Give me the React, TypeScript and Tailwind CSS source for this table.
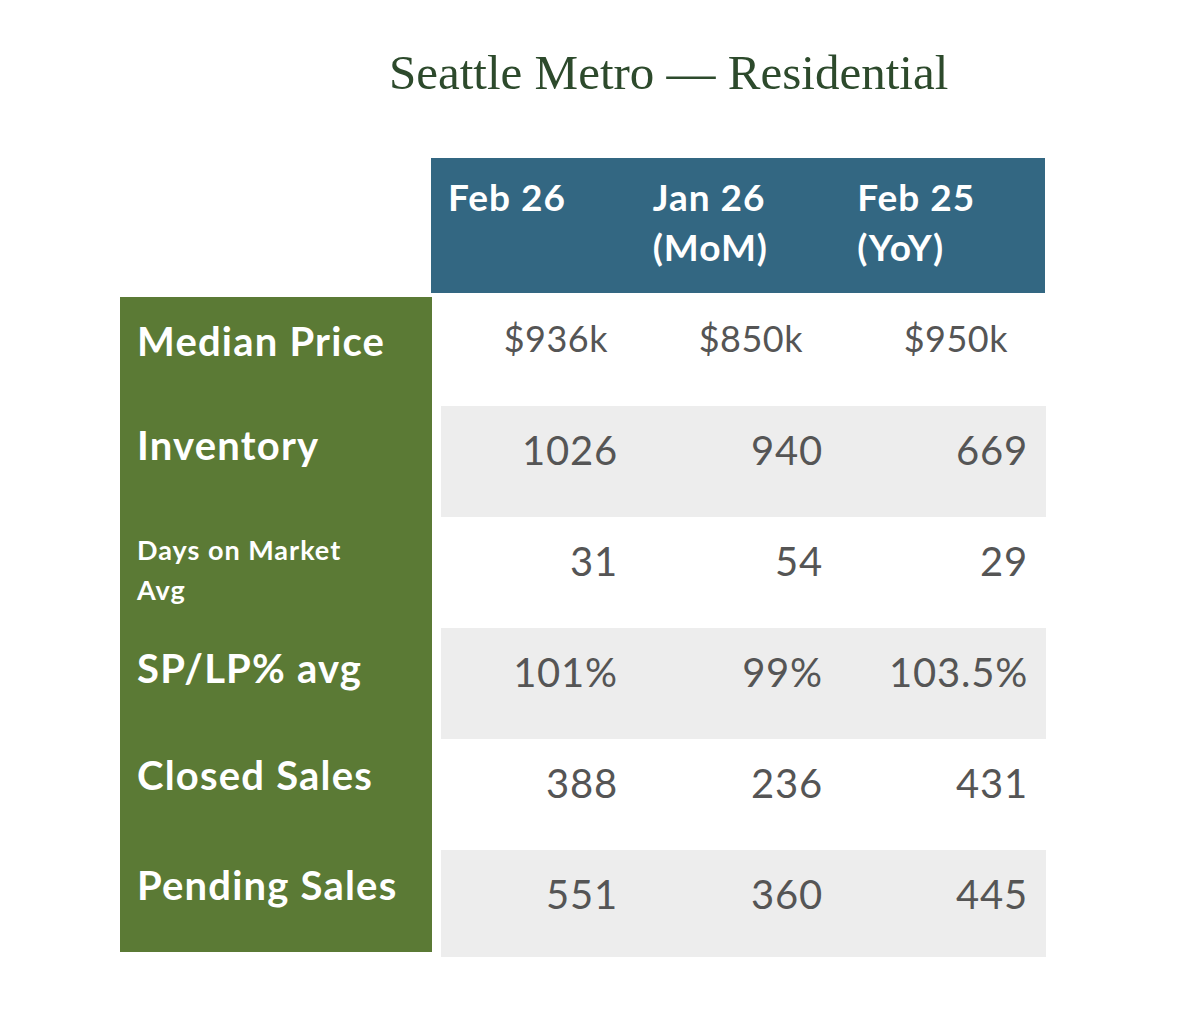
import React from "react";

const rows = [
  { label: "Median Price", vals: ["$936k", "$850k", "$950k"], gray: false, h: "h-[109px]" },
  { label: "Inventory", vals: ["1026", "940", "669"], gray: true, h: "h-[111px]" },
  { label: "Days on Market Avg", vals: ["31", "54", "29"], gray: false, h: "h-[111px]" },
  { label: "SP/LP% avg", vals: ["101%", "99%", "103.5%"], gray: true, h: "h-[111px]" },
  { label: "Closed Sales", vals: ["388", "236", "431"], gray: false, h: "h-[111px]" },
  { label: "Pending Sales", vals: ["551", "360", "445"], gray: true, h: "h-[107px]" },
];

const sans = "font-['Lato','Open_Sans',sans-serif]";

export default function App() {
  return (
    <div className="w-[1196px] h-[1022px] bg-white overflow-hidden">
      <h1 className="pl-[389px] pt-[44px] text-[49px] leading-[58px] font-['Liberation_Serif','Times_New_Roman',serif] text-[#2d4a2c] font-normal">
        Seattle Metro — Residential
      </h1>

      <div className={`ml-[431px] mt-[56px] w-[614px] h-[135px] bg-[#336782] grid grid-cols-3 ${sans} text-white font-bold text-[37px] leading-[50px] tracking-[1px]`}>
        <div className="pl-[17px] pt-[14px]">Feb 26</div>
        <div className="pl-[17px] pt-[14px]">
          <div>Jan 26</div>
          <div>(MoM)</div>
        </div>
        <div className="pl-[17px] pt-[14px]">
          <div>Feb 25</div>
          <div>(YoY)</div>
        </div>
      </div>

      <div className="flex mt-[4px] ml-[120px]">
        <div className={`w-[312px] h-[655px] bg-[#5b7a35] flex flex-col text-white font-bold ${sans}`}>
          <div className="h-[109px] pl-[17px] pt-[21px] text-[40px] leading-[46px] tracking-[1.2px]">Median Price</div>
          <div className="h-[111px] pl-[17px] pt-[16px] text-[40px] leading-[46px] tracking-[1.2px]">Inventory</div>
          <div className="h-[111px] pl-[17px] pt-[13px] text-[27px] leading-[40px] tracking-[1px]">
            <div>Days on Market</div>
            <div>Avg</div>
          </div>
          <div className="h-[111px] pl-[17px] pt-[17px] text-[40px] leading-[46px] tracking-[1.2px]">SP/LP% avg</div>
          <div className="h-[111px] pl-[17px] pt-[13px] text-[40px] leading-[46px] tracking-[1.2px]">Closed Sales</div>
          <div className="h-[102px] pl-[17px] pt-[12px] text-[40px] leading-[46px] tracking-[1.2px]">Pending Sales</div>
        </div>

        <div className={`ml-[9px] w-[605px] flex flex-col ${sans} text-[#555555]`}>
          {rows.map((r, i) => (
            <div key={r.label} className={`${r.h} flex ${r.gray ? "bg-[#ededed]" : "bg-white"}`}>
              {i === 0 ? (
                <>
                  <div className="w-[195px] text-right pr-[28px] pt-[19px] text-[36px] leading-[44px] tracking-[0.5px]">{r.vals[0]}</div>
                  <div className="w-[205px] text-right pr-[38px] pt-[19px] text-[36px] leading-[44px] tracking-[0.5px]">{r.vals[1]}</div>
                  <div className="w-[205px] text-right pr-[38px] pt-[19px] text-[36px] leading-[44px] tracking-[0.5px]">{r.vals[2]}</div>
                </>
              ) : (
                <>
                  <div className="w-[195px] text-right pr-[18px] pt-[20px] text-[40px] leading-[48px] tracking-[0.8px]">{r.vals[0]}</div>
                  <div className="w-[205px] text-right pr-[18px] pt-[20px] text-[40px] leading-[48px] tracking-[0.8px]">{r.vals[1]}</div>
                  <div className="w-[205px] text-right pr-[18px] pt-[20px] text-[40px] leading-[48px] tracking-[0.8px]">{r.vals[2]}</div>
                </>
              )}
            </div>
          ))}
        </div>
      </div>
    </div>
  );
}
